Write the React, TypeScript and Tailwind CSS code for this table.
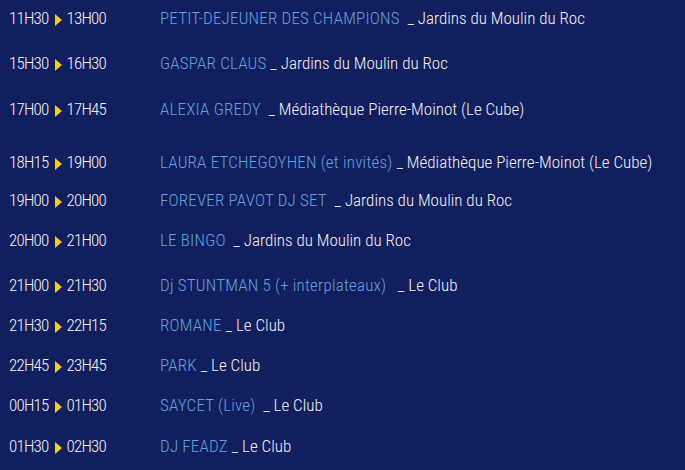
const rows = [
  { from: "11H30", to: "13H00", name: "PETIT-DEJEUNER DES CHAMPIONS", place: "  _ Jardins du Moulin du Roc", h: "h-[45px]" },
  { from: "15H30", to: "16H30", name: "GASPAR CLAUS", place: " _ Jardins du Moulin du Roc", h: "h-[46px]" },
  { from: "17H00", to: "17H45", name: "ALEXIA GREDY", place: "  _ Médiathèque Pierre-Moinot (Le Cube)", h: "h-[53px]" },
  { from: "18H15", to: "19H00", name: "LAURA ETCHEGOYHEN (et invités)", place: " _ Médiathèque Pierre-Moinot (Le Cube)", h: "h-[38px]" },
  { from: "19H00", to: "20H00", name: "FOREVER PAVOT DJ SET", place: "  _ Jardins du Moulin du Roc", h: "h-[40px]" },
  { from: "20H00", to: "21H00", name: "LE BINGO", place: "  _ Jardins du Moulin du Roc", h: "h-[45px]" },
  { from: "21H00", to: "21H30", name: "Dj STUNTMAN 5 (+ interplateaux)", place: "   _ Le Club", h: "h-[40px]" },
  { from: "21H30", to: "22H15", name: "ROMANE", place: " _ Le Club", h: "h-[40px]" },
  { from: "22H45", to: "23H45", name: "PARK", place: " _ Le Club", h: "h-[40px]" },
  { from: "00H15", to: "01H30", name: "SAYCET (Live)", place: "  _ Le Club", h: "h-[41px]" },
  { from: "01H30", to: "02H30", name: "DJ FEADZ", place: " _ Le Club", h: "h-[41px]" },
];

// small yellow play-style arrow between the two times
const Arrow = () => (
  <svg className="ml-[6px] mr-[5px] mt-[6px] w-[7px] h-[12px] shrink-0" viewBox="0 0 7 12">
    <polygon points="0,0 7,6 0,12" fill="#f5cf0f" />
  </svg>
);

export default function App() {
  return (
    <div className="w-[685px] h-[470px] bg-[#121f5f] pt-[8px] overflow-hidden font-['Roboto',sans-serif] font-stretch-[75%] font-light text-[17px] leading-[20px]">
      {rows.map((r) => (
        <div key={r.from + r.name} className={`flex items-start ${r.h}`}>
          <div className="w-[160px] shrink-0 pl-[9px] flex items-start text-[#f2f2f2] tracking-[-0.8px]">
            <span>{r.from}</span>
            <Arrow />
            <span>{r.to}</span>
          </div>
          <div className="whitespace-pre">
            <span className="text-[#64a0dc] tracking-[0.2px]">{r.name}</span>
            <span className="text-[#f2f2f2]">{r.place}</span>
          </div>
        </div>
      ))}
    </div>
  );
}
